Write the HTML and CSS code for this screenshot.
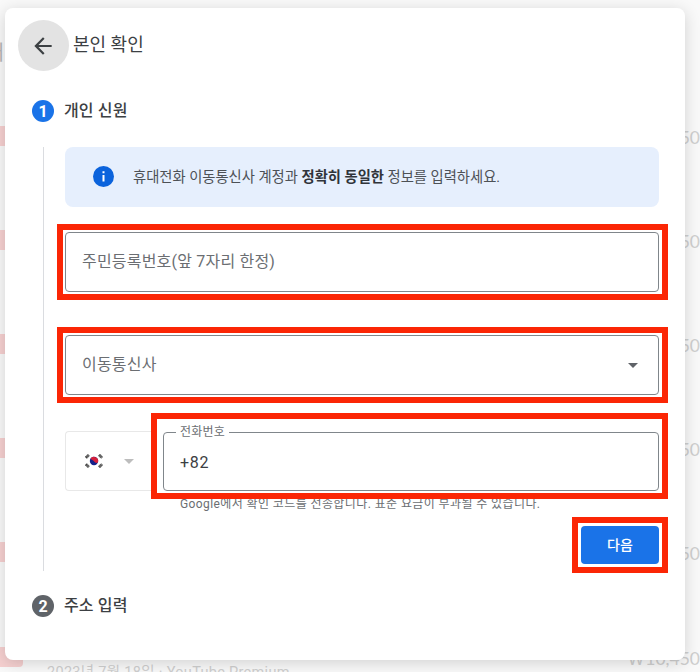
FILE: index.html
```html
<!DOCTYPE html>
<html lang="ko">
<head>
    <meta charset="UTF-8">
    <meta name="viewport" content="width=device-width, initial-scale=1.0">
    <title>본인 확인</title>
    <link rel="stylesheet" href="styles.css">
</head>
<body>

    <!-- payment list behind the dialog -->
    <div class="history">
        <div class="month">어</div>
        <div class="row"><span class="thumb"></span><span class="amount">50</span></div>
        <div class="row"><span class="thumb"></span><span class="amount">50</span></div>
        <div class="row"><span class="thumb"></span><span class="amount">50</span></div>
        <div class="row"><span class="thumb"></span><span class="amount">50</span></div>
        <div class="row"><span class="thumb"></span><span class="amount">50</span></div>
        <div class="row"><span class="thumb"></span><span class="date">2023년 7월 18일 · YouTube Premium</span><span class="amount">₩10,450</span></div>
    </div>

    <main class="dialog">
        <header class="top">
            <button class="back" aria-label="뒤로">
                <svg width="26" height="26" viewBox="0 0 24 24"><path d="M20 11H7.83l5.59-5.59L12 4l-8 8 8 8 1.41-1.41L7.83 13H20z" fill="#3c4043"/></svg>
            </button>
            <h1>본인 확인</h1>
        </header>

        <div class="step">
            <span class="num">1</span>
            <h2>개인 신원</h2>
        </div>

        <section class="content">
            <div class="info">
                <svg width="21" height="21" viewBox="0 0 21 21">
                    <circle cx="10.5" cy="10.5" r="10.5" fill="#0b63dc"/>
                    <path d="M9.5 5.3h2v2h-2zM9.5 9h2v6.6h-2z" fill="#fff"/>
                </svg>
                <p>휴대전화 이동통신사 계정과 <b>정확히 동일한</b> 정보를 입력하세요.</p>
            </div>

            <div class="mark">
                <div class="field">주민등록번호(앞 7자리 한정)</div>
            </div>

            <div class="mark carrier">
                <div class="field">이동통신사<span class="arrow"></span></div>
            </div>

            <div class="phone">
                <div class="country">
                    <svg width="18" height="14" viewBox="0 0 18 14">
                        <g stroke="#333" stroke-width="2.8" stroke-dasharray="1 0.3">
                            <path d="M0.9 3.8L3.9 0.8M14.1 13.2L17.1 10.2M0.9 10.2L3.9 13.2M14.1 0.8L17.1 3.8"/>
                        </g>
                        <circle cx="9" cy="7" r="4.2" fill="#13208a"/>
                        <path d="M5.3 5A4.2 4.2 0 0 1 13 8.2C11.8 9.7 10 8.5 9 7.2S6 5.5 5.3 5z" fill="#d5203b"/>
                    </svg>
                    <span class="arrow"></span>
                </div>
                <div class="mark number">
                    <fieldset class="field">
                        <legend>전화번호</legend>
                        <span>+82</span>
                    </fieldset>
                </div>
            </div>
            <p class="helper">Google에서 확인 코드를 전송합니다. 표준 요금이 부과될 수 있습니다.</p>

            <div class="mark submit">
                <button class="next">다음</button>
            </div>
        </section>

        <div class="step second">
            <span class="num">2</span>
            <h2>주소 입력</h2>
        </div>
    </main>

</body>
</html>
```

FILE: styles.css
```css
* {
    box-sizing: border-box;
}

body {
    margin: 0;
    width: 700px;
    height: 672px;
    overflow: hidden;
    display: grid;
    background-color: #f9f9f9;
    font-family: Roboto, "Noto Sans CJK KR", sans-serif;
    color: #3c4043;
}

h1, h2, p {
    margin: 0;
}

button {
    border: none;
    padding: 0;
    font-family: inherit;
}

.history {
    grid-area: 1 / 1;
    height: 672px;
    overflow: hidden;
}

.month {
    height: 85px;
    margin-left: -14px;
    padding-top: 41px;
    font-size: 20px;
    line-height: 24px;
    color: #b5b5b5;
}

.row {
    display: flex;
    align-items: center;
    height: 104.2px;
}

.thumb {
    width: 23px;
    height: 20px;
    margin-bottom: 3px;
    background-color: #f6d0d0;
    border-radius: 0 0 4px 0;
}

.amount {
    margin-left: auto;
    font-family: Lato, "Noto Sans CJK KR", sans-serif;
    font-size: 17.5px;
    color: #cfcfcf;
}

.date {
    align-self: flex-end;
    margin: 0 0 27px 24px;
    font-size: 14.5px;
    line-height: 20px;
    letter-spacing: 0.3px;
    color: #cfcfcf;
}

.dialog {
    grid-area: 1 / 1;
    z-index: 1;
    width: 680px;
    height: 652px;
    margin: 8px 0 0 5px;
    padding: 12px 17px 0 13px;
    background-color: #fff;
    border-radius: 8px;
    box-shadow: 0 3px 16px rgba(0, 0, 0, 0.16);
}

.top {
    display: flex;
    align-items: center;
    gap: 4px;
}

.back {
    display: flex;
    align-items: center;
    justify-content: center;
    width: 51px;
    height: 51px;
    padding-right: 1px;
    border-radius: 50%;
    background-color: #e3e3e3;
}

h1 {
    font-size: 18px;
    font-weight: 400;
    line-height: 24px;
    margin-top: -1px;
}

.step {
    display: flex;
    align-items: center;
    gap: 10px;
    height: 22px;
    margin: 29px 0 0 14px;
}

.num {
    display: flex;
    align-items: center;
    justify-content: center;
    width: 22px;
    height: 22px;
    border-radius: 50%;
    background-color: #1a73e8;
    color: #fff;
    font-size: 16px;
    font-weight: 700;
}

h2 {
    font-size: 16px;
    font-weight: 500;
    line-height: 22px;
    letter-spacing: 0.15px;
    margin-top: -1px;
}

.content {
    height: 424px;
    margin: 25px 0 0 25px;
    padding-left: 13px;
    border-left: 1px solid #dadce0;
}

.info {
    display: flex;
    align-items: center;
    gap: 19px;
    height: 60px;
    margin: 0 9px 17px 8px;
    padding: 0 0 2px 28px;
    border-radius: 8px;
    background-color: #e6effd;
    font-size: 14.3px;
    color: #4d5156;
}

.info p {
    margin-top: -2px;
}

.info b {
    color: #30343a;
}

/* red highlight frame */
.mark {
    position: relative;
    z-index: 1;
    height: 76px;
    padding: 2px 3px 2px 2px;
    border: 6px solid #fb2605;
}

.field {
    display: flex;
    align-items: center;
    justify-content: space-between;
    height: 60px;
    padding: 0 20px 5px 16px;
    border: 1px solid #80868b;
    border-radius: 4px;
    font-size: 16px;
    letter-spacing: 0.2px;
    color: #6b6e72;
}

.carrier {
    margin-top: 27px;
}

.arrow {
    border: 5px solid transparent;
    border-top-color: #5f6368;
    border-bottom: none;
}

.field .arrow {
    margin-top: 5px;
}

.phone {
    display: flex;
    align-items: flex-start;
    margin-top: 10px;
    padding-left: 8px;
}

.country {
    display: flex;
    align-items: center;
    gap: 21px;
    width: 86px;
    height: 60px;
    margin-top: 18px;
    padding-left: 19px;
    border: 1px solid #e8e8e8;
    border-right: none;
    border-radius: 4px 0 0 4px;
}

.country .arrow {
    border-top-color: #bdbdbd;
}

.number {
    flex: 1;
    height: 86px;
    padding: 4px 3px 2px 6px;
}

.number .field {
    display: block;
    height: 68px;
    margin: 0;
    padding: 0 12px;
    color: #3c4043;
}

.number legend {
    padding: 1px 4px 0;
    font-size: 12px;
    line-height: 17px;
    letter-spacing: 0.2px;
    color: #6b6e72;
}

.number span {
    display: block;
    margin: 9px 0 0 4px;
    line-height: 26px;
    letter-spacing: 0.7px;
}

.helper {
    margin: -4px 0 0 123px;
    font-size: 12px;
    line-height: 18px;
    letter-spacing: 0.4px;
    color: #6b6e72;
    white-space: nowrap;
}

.submit {
    width: 96px;
    height: 56px;
    margin: 4px 0 0 auto;
    padding: 3px;
}

.next {
    display: block;
    width: 78px;
    height: 38px;
    padding-bottom: 2px;
    border-radius: 4px;
    background-color: #1a73e8;
    color: #fff;
    font-size: 14px;
    font-weight: 500;
}

.second {
    margin-top: 24px;
}

.second .num {
    background-color: #5f6368;
}
```
